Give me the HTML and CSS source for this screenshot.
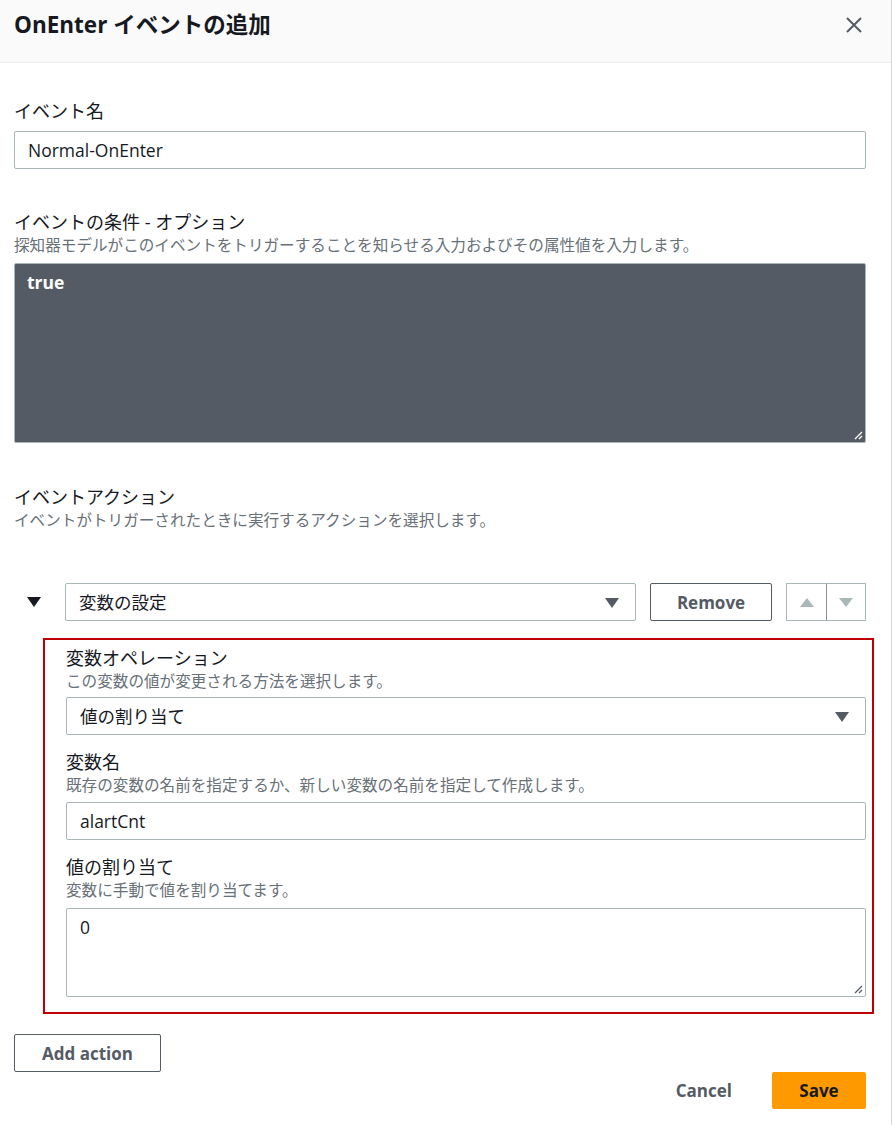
FILE: index.html
```html
<!DOCTYPE html>
<html lang="ja">
<head>
<meta charset="utf-8">
<title>OnEnter イベントの追加</title>
<link rel="stylesheet" href="styles.css">
</head>
<body>
<div class="panel">
  <header class="header">
    <h1 class="title">OnEnter イベントの追加</h1>
    <button class="close" aria-label="閉じる">
      <svg width="18" height="18" viewBox="0 0 18 18"><path d="M2 2 L16 16 M16 2 L2 16" stroke="#545b64" stroke-width="2" fill="none"/></svg>
    </button>
  </header>

  <main class="content">
    <div class="field f-name">
      <div class="label">イベント名</div>
      <div class="input">Normal-OnEnter</div>
    </div>

    <div class="field f-cond">
      <div class="label">イベントの条件 - オプション</div>
      <div class="desc">探知器モデルがこのイベントをトリガーすることを知らせる入力およびその属性値を入力します。</div>
      <div class="code">true
        <svg class="grip" width="10" height="10" viewBox="0 0 10 10"><path d="M9 2 L2 9 M9 6 L6 9" stroke="#ffffff" stroke-width="1.3"/></svg>
      </div>
    </div>

    <div class="field f-actions">
      <div class="label">イベントアクション</div>
      <div class="desc">イベントがトリガーされたときに実行するアクションを選択します。</div>
    </div>

    <div class="action-row">
      <span class="toggle"><svg width="14" height="10" viewBox="0 0 14 10"><path d="M0 0 H14 L7 10 Z" fill="#16191f"/></svg></span>
      <div class="select grow">変数の設定<span class="caret"></span></div>
      <button class="btn">Remove</button>
      <div class="updown">
        <span class="ud"><svg width="14" height="9" viewBox="0 0 14 9"><path d="M0 9 H14 L7 0 Z" fill="#aab7b8"/></svg></span>
        <span class="ud ud2"><svg width="14" height="9" viewBox="0 0 14 9"><path d="M0 0 H14 L7 9 Z" fill="#aab7b8"/></svg></span>
      </div>
    </div>

    <section class="action-box">
      <div class="sub">
        <div class="label">変数オペレーション</div>
        <div class="desc">この変数の値が変更される方法を選択します。</div>
        <div class="select">値の割り当て<span class="caret"></span></div>
      </div>
      <div class="sub">
        <div class="label">変数名</div>
        <div class="desc">既存の変数の名前を指定するか、新しい変数の名前を指定して作成します。</div>
        <div class="input">alartCnt</div>
      </div>
      <div class="sub">
        <div class="label">値の割り当て</div>
        <div class="desc">変数に手動で値を割り当てます。</div>
        <div class="textarea">0
          <svg class="grip" width="10" height="10" viewBox="0 0 10 10"><path d="M9 2 L2 9 M9 6 L6 9" stroke="#545b64" stroke-width="1.3"/></svg>
        </div>
      </div>
    </section>

    <button class="btn add">Add action</button>

    <footer class="footer">
      <button class="link">Cancel</button>
      <button class="primary">Save</button>
    </footer>
  </main>
</div>
</body>
</html>
```

FILE: styles.css
```css
* { box-sizing: border-box; }
html, body { margin: 0; padding: 0; background: #ffffff; }
body {
  font-family: "Open Sans", "Noto Sans CJK JP", sans-serif;
  color: #16191f;
  font-size: 17px;
}
button { font-family: inherit; cursor: pointer; }

.panel {
  width: 892px;
  min-height: 1125px;
  border-right: 1px solid #d5dbdb;
}

.header {
  height: 63px;
  background: #fafafa;
  border-bottom: 1px solid #eaeded;
  display: flex;
  justify-content: space-between;
  align-items: flex-start;
  padding: 11px 28px 0 14px;
}
.title {
  margin: 0;
  font-size: 22.5px;
  line-height: 28px;
  font-weight: 700;
  color: #16191f;
}
.close {
  border: 0;
  background: none;
  padding: 0;
  margin-top: 5px;
  width: 18px;
  height: 18px;
  display: flex;
}

.content {
  padding: 36px 25px 0 14px;
  display: flex;
  flex-direction: column;
}

.label {
  font-size: 18px;
  line-height: 24px;
  color: #16191f;
}
.desc {
  font-size: 15.6px;
  line-height: 22px;
  color: #687078;
}

.input, .select {
  height: 38px;
  border: 1px solid #aab7b8;
  border-radius: 2px;
  font-size: 17.5px;
  line-height: 36px;
  padding: 0 13px;
  color: #16191f;
  background: #fff;
}
.select { position: relative; }
.caret {
  position: absolute;
  right: 16px;
  top: 14px;
  width: 0; height: 0;
  border-left: 7px solid transparent;
  border-right: 7px solid transparent;
  border-top: 10px solid #545b64;
}

.f-name .input { margin-top: 8px; }
.f-cond { margin-top: 41px; }
.code {
  position: relative;
  margin-top: 7px;
  height: 180px;
  background: #545b64;
  border: 1px solid #aab7b8;
  border-radius: 2px;
  color: #ffffff;
  font-weight: 700;
  font-size: 17.5px;
  line-height: 24px;
  padding: 6px 12px;
}
.grip { position: absolute; right: 2px; bottom: 2px; }
.f-actions { margin-top: 42px; }

.action-row {
  margin-top: 52px;
  display: flex;
  align-items: center;
  gap: 14px;
  height: 38px;
}
.toggle {
  width: 37px;
  display: flex;
  justify-content: center;
  padding-left: 2px;
}
.grow { flex: 1; }
.btn {
  height: 38px;
  border: 1px solid #545b64;
  border-radius: 2px;
  background: #fff;
  color: #545b64;
  font-weight: 700;
  font-size: 17px;
  padding: 0 26px;
}
.action-row .btn { width: 122px; padding: 0; }
.updown {
  display: flex;
  height: 38px;
  width: 80px;
}
.ud {
  width: 40px;
  height: 38px;
  border: 1px solid #aab7b8;
  display: flex;
  align-items: center;
  justify-content: center;
  background: #fff;
}
.ud2 { border-left: 1px solid #879596; }
.ud:first-child { border-right: 0; }

.action-box {
  margin: 17px -8px 0 29px;
  border: 2px solid #c00000;
  padding: 6px 6px 15px 21px;
  display: flex;
  flex-direction: column;
  gap: 15px;
}
.sub { display: flex; flex-direction: column; }
.sub .select { margin-top: 5px; }
.sub .input { margin-top: 6px; }
.textarea {
  position: relative;
  margin-top: 7px;
  height: 89px;
  border: 1px solid #aab7b8;
  border-radius: 2px;
  font-size: 17.5px;
  line-height: 24px;
  padding: 6px 13px;
}

.add {
  margin-top: 20px;
  align-self: flex-start;
  width: 147px;
  padding: 0;
}

.footer {
  display: flex;
  justify-content: flex-end;
  align-items: center;
  gap: 20px;
}
.link {
  border: 0;
  background: none;
  color: #545b64;
  font-weight: 700;
  font-size: 17px;
  padding: 0 20px;
  height: 37px;
}
.primary {
  width: 94px;
  height: 37px;
  border: 0;
  border-radius: 2px;
  background: #ff9900;
  color: #16191f;
  font-weight: 700;
  font-size: 17px;
}
```
